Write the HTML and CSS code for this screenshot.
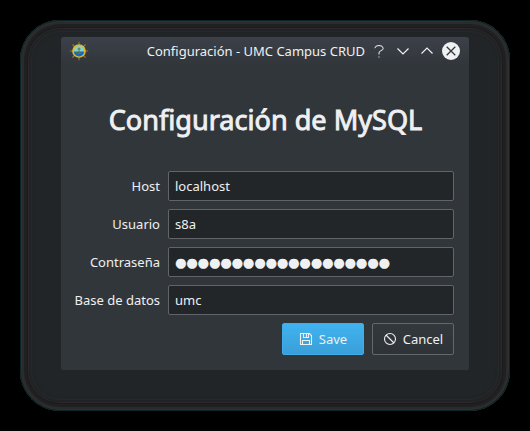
FILE: index.html
```html
<!DOCTYPE html>
<html lang="es">
<head>
<meta charset="utf-8">
<title>Configuración - UMC Campus CRUD</title>
<link rel="stylesheet" href="styles.css">
</head>
<body>
<div class="shadow">
  <main class="window">
    <header class="titlebar">
      <svg class="app-icon" width="20" height="20" viewBox="0 0 20 20">
        <path d="M10 .8V19.2M.8 10H19.2M3.5 3.5 16.500 16.500M16.500 3.500 3.500 16.500" stroke="#8f7b34" stroke-width="1.100"/>
        <circle cx="10" cy="10" r="5.900" fill="#83d3d5" stroke="#dfb832" stroke-width="1.900"/>
        <path d="M4.900 10.500H15.100A5.100 5.100 0 0 1 4.900 10.500" fill="#1767c5"/>
        <path d="M10 6.500V12.500M8.500 8H11.500M7.500 11Q8 12.700 10 12.700T12.500 11" stroke="#65752f" stroke-width="1" fill="none"/>
      </svg>
      <span class="title">Configuración - UMC Campus CRUD</span>
      <svg class="ctl" width="18" height="18" viewBox="0 0 18 18"><path d="M4.800 6.200Q5 3.500 9 3.500T13.200 6.200Q13.200 8 11 8.700Q9 9.300 9 11V12.500" class="thin"/><path d="M9 14V16" class="dot"/></svg>
      <svg class="ctl" width="18" height="18" viewBox="0 0 18 18"><path d="M3.500 6.500 9 12 14.500 6.500"/></svg>
      <svg class="ctl" width="18" height="18" viewBox="0 0 18 18"><path d="M3.500 11.500 9 6 14.500 11.500"/></svg>
      <svg class="ctl" width="18" height="18" viewBox="0 0 18 18"><circle cx="9" cy="9" r="9"/><path d="M4.700 4.700 13.300 13.300M13.300 4.700 4.700 13.300" class="dark"/></svg>
    </header>
    <h1>Configuración de MySQL</h1>
    <form class="form">
      <label>Host</label><div class="field">localhost</div>
      <label>Usuario</label><div class="field">s8a</div>
      <label>Contraseña</label><div class="field secret">●●●●●●●●●●●●●●●●●●●</div>
      <label>Base de datos</label><div class="field">umc</div>
    </form>
    <footer class="actions">
      <button class="btn primary"><svg width="14" height="14" viewBox="0 0 14 14"><path d="M1.500 1.500H10.500L12.500 3.500V12.500H1.500ZM4.500 1.500V5.500H9.500V1.500M3.500 12.500V8.500H10.500V12.500"/><path d="M7.500 2V5"/></svg>Save</button>
      <button class="btn"><svg width="14" height="14" viewBox="0 0 14 14"><circle cx="7" cy="7" r="5.500"/><path d="M3 3 11 11"/></svg>Cancel</button>
    </footer>
  </main>
</div>
</body>
</html>
```
FILE: styles.css
```css
* { box-sizing: border-box; }
body {
  margin: 0;
  height: 431px;
  padding: 20px;
  overflow: hidden;
  background: #000;
  color: #eff0f1;
  font: 13px/18px "Noto Sans", sans-serif;
}
.shadow {
  width: 490px;
  height: 391px;
  padding: 17px 41px 0;
  border-radius: 40px;
  background: #222528;
  box-shadow:
    inset 0 0 0 1px #0b2427,
    inset 0 0 0 2px #2e3030,
    inset 0 0 0 4px #2b2b2b,
    inset 0 0 0 7px #202022,
    inset 0 0 0 8px #1a1b1d,
    inset 0 0 0 9px #29292b,
    inset 0 0 0 11px #202224,
    inset 0 0 0 12px #272829,
    inset 0 0 0 15px #212426;
}
.window {
  width: 408px;
  height: 333px;
  border-radius: 3px 3px 2px 2px;
  background: linear-gradient(#3c4049, #31363b 29px);
}
.titlebar {
  display: flex;
  align-items: center;
  height: 28px;
  padding: 0 9px 0 8px;
  gap: 6px;
}
.title { flex: 1; margin-right: -1px; text-align: right; white-space: nowrap; }
.ctl { fill: none; stroke: #eff0f1; stroke-width: 1.2; }
.ctl circle { fill: #eff0f1; stroke: none; }
.ctl .dark { stroke: #31363b; stroke-width: 1.3; }
.ctl .thin { stroke-width: 1; }
.ctl .dot { stroke: #8b8e92; }
h1 {
  margin: 36px 0 0;
  height: 40px;
  padding-left: 1px;
  text-align: center;
  font-size: 27.1px;
  line-height: 38px;
  font-weight: 400;
  white-space: nowrap;
  -webkit-text-stroke: .9px #eff0f1;
}
.form {
  display: grid;
  grid-template-columns: 99px 286px;
  grid-auto-rows: 30px;
  gap: 8px;
  margin: 30px 0 0;
}
label { text-align: right; line-height: 30px; white-space: nowrap; }
.field {
  padding: 0 6px;
  border: 1px solid #616569;
  border-radius: 2px;
  background: #232629;
  line-height: 28px;
}
.secret { line-height: 30px; font-family: "DejaVu Sans", sans-serif; font-size: 13.4px; letter-spacing: -.38px; }
.actions {
  display: flex;
  justify-content: flex-end;
  gap: 8px;
  padding: 8px 15px 0 0;
}
.btn {
  display: flex;
  align-items: center;
  justify-content: center;
  gap: 6px;
  width: 82px;
  height: 32px;
  padding: 0;
  border: 1px solid #64686c;
  border-radius: 2px;
  background: linear-gradient(#33383d, #2e3338);
  color: #eff0f1;
  font: inherit;
}
.btn svg { fill: none; stroke: #eff0f1; stroke-width: 1.1; }
.primary { border-color: #3daee9; background: linear-gradient(#40b3f0, #3a9fd8); }
```
